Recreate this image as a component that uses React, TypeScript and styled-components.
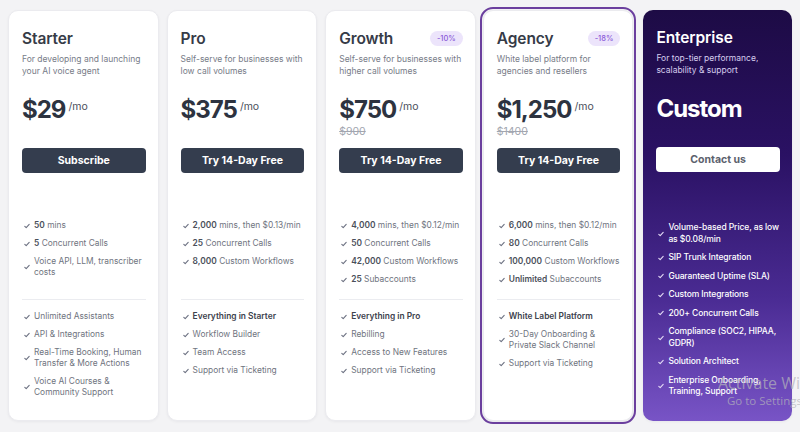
import React from "react";
import styled, { createGlobalStyle, css } from "styled-components";

const GlobalStyle = createGlobalStyle`
  html, body { margin: 0; padding: 0; }
  body {
    background: #f3f3f5;
    font-family: Inter, "Noto Sans", "Liberation Sans", sans-serif;
    -webkit-font-smoothing: antialiased;
  }
  * { box-sizing: border-box; }
`;

type Variant = "default" | "highlight" | "dark";

const Page = styled.div`
  position: relative;
  display: flex;
  gap: 8px;
  height: 432px;
  width: 800px;
  padding: 10px 8px 11px;
  overflow: hidden;
`;

const Card = styled.div<{ $variant: Variant }>`
  flex: 1 1 0;
  min-width: 0;
  display: flex;
  flex-direction: column;
  padding: 17px 12px 12px 13px;
  border-radius: 10px;
  background: #ffffff;
  border: 1px solid #ebebef;
  box-shadow: 0 1px 3px rgba(20, 20, 40, 0.05);
  ${(p) =>
    p.$variant === "highlight" &&
    css`
      outline: 2px solid #6b3f9e;
      outline-offset: 1px;
      margin: 0 0 0 -1px;
    `}
  ${(p) =>
    p.$variant === "dark" &&
    css`
      border: none;
      margin-left: 2px;
      background: linear-gradient(180deg, #1d0b45 0%, #2a1163 35%, #4a2b93 70%, #7854c6 100%);
    `}
`;

const Header = styled.div`
  display: flex;
  align-items: center;
  justify-content: space-between;
  height: 20px;
`;

const Title = styled.h2<{ $dark?: boolean }>`
  margin: 0;
  font-size: 15.5px;
  font-weight: 600;
  letter-spacing: -0.1px;
  color: ${(p) => (p.$dark ? "#ffffff" : "#363b47")};
`;

const Badge = styled.span`
  display: inline-flex;
  align-items: center;
  justify-content: center;
  height: 15px;
  padding: 0 7px;
  border-radius: 8px;
  background: #ece4fb;
  color: #8a5ad8;
  font-size: 7.5px;
  font-weight: 500;
`;

const Desc = styled.p<{ $dark?: boolean }>`
  margin: 5px 0 0;
  font-size: 8.5px;
  line-height: 12px;
  min-height: 24px;
  color: ${(p) => (p.$dark ? "#d6cdee" : "#777c88")};
`;

const PriceRow = styled.div`
  display: flex;
  align-items: flex-start;
  gap: 3px;
  margin-top: 18px;
  height: 30px;
`;

const Amount = styled.span<{ $dark?: boolean }>`
  font-size: 24px;
  line-height: 30px;
  font-weight: 700;
  letter-spacing: -1px;
  color: ${(p) => (p.$dark ? "#ffffff" : "#2d3340")};
`;

const Per = styled.span`
  font-size: 10.5px;
  margin-top: 5px;
  color: #4a4f5b;
`;

const OldPrice = styled.div`
  height: 14px;
  font-size: 10.5px;
  line-height: 14px;
  color: #a2a6b0;
  text-decoration: line-through;
`;

const Cta = styled.button<{ $light?: boolean }>`
  margin-top: 9px;
  height: 25px;
  width: 100%;
  border: none;
  border-radius: 4px;
  font-family: inherit;
  font-size: 10.5px;
  font-weight: 700;
  cursor: pointer;
  background: ${(p) => (p.$light ? "#ffffff" : "#343d4e")};
  color: ${(p) => (p.$light ? "#5b616d" : "#ffffff")};
`;

const List = styled.ul<{ $first?: boolean; $dark?: boolean }>`
  list-style: none;
  margin: ${(p) => (p.$first ? (p.$dark ? "50px 0 0" : "47px 0 0") : "11px 0 0")};
  padding: 0 0 0 2px;
  display: flex;
  flex-direction: column;
  gap: 7px;
  ${(p) => p.$first && !p.$dark && "min-height: 68px;"}
`;

const Item = styled.li<{ $dark?: boolean; $strong?: boolean }>`
  display: flex;
  align-items: center;
  gap: 4px;
  font-size: ${(p) => (p.$dark ? "8.5px" : "8.4px")};
  line-height: ${(p) => (p.$dark ? "11.5px" : "11px")};
  letter-spacing: ${(p) => (p.$dark ? "-0.1px" : "0")};
  font-weight: ${(p) => (p.$dark ? 500 : p.$strong ? 600 : 400)};
  color: ${(p) => (p.$dark ? "#ffffff" : p.$strong ? "#3d424d" : "#6f7480")};
  b {
    font-weight: 600;
    color: #4a4f5a;
  }
`;

const Check = styled.svg<{ $dark?: boolean }>`
  flex: 0 0 auto;
  width: 6px;
  height: 6px;
  color: ${(p) => (p.$dark ? "#e4dcf6" : "#6b7080")};
`;

const Divider = styled.hr`
  margin: 11px 0 0;
  border: none;
  border-top: 1px solid #ebecf0;
`;

const Watermark = styled.div`
  position: absolute;
  left: 718px;
  top: 373px;
  color: rgba(180, 180, 186, 0.72);
  font-family: "Open Sans", "Noto Sans", sans-serif;
  white-space: nowrap;
  pointer-events: none;
`;

const WmBig = styled.div`
  font-size: 16px;
  line-height: 20px;
`;

const WmSmall = styled.div`
  font-size: 11.5px;
  line-height: 16px;
  margin-left: 9px;
`;

type Feature = { bold?: string; text: string; strong?: boolean };

type Plan = {
  name: string;
  desc: string;
  price: string;
  per?: string;
  old?: string;
  badge?: string;
  cta: string;
  variant: Variant;
  list1: Feature[];
  list2?: Feature[];
};

const plans: Plan[] = [
  {
    name: "Starter",
    desc: "For developing and launching your AI voice agent",
    price: "$29",
    per: "/mo",
    cta: "Subscribe",
    variant: "default",
    list1: [
      { bold: "50", text: " mins" },
      { bold: "5", text: " Concurrent Calls" },
      { text: "Voice API, LLM, transcriber costs" },
    ],
    list2: [
      { text: "Unlimited Assistants" },
      { text: "API & Integrations" },
      { text: "Real-Time Booking, Human Transfer & More Actions" },
      { text: "Voice AI Courses & Community Support" },
    ],
  },
  {
    name: "Pro",
    desc: "Self-serve for businesses with low call volumes",
    price: "$375",
    per: "/mo",
    cta: "Try 14-Day Free",
    variant: "default",
    list1: [
      { bold: "2,000", text: " mins, then $0.13/min" },
      { bold: "25", text: " Concurrent Calls" },
      { bold: "8,000", text: " Custom Workflows" },
    ],
    list2: [
      { text: "Everything in Starter", strong: true },
      { text: "Workflow Builder" },
      { text: "Team Access" },
      { text: "Support via Ticketing" },
    ],
  },
  {
    name: "Growth",
    desc: "Self-serve for businesses with higher call volumes",
    price: "$750",
    per: "/mo",
    old: "$900",
    badge: "-10%",
    cta: "Try 14-Day Free",
    variant: "default",
    list1: [
      { bold: "4,000", text: " mins, then $0.12/min" },
      { bold: "50", text: " Concurrent Calls" },
      { bold: "42,000", text: " Custom Workflows" },
      { bold: "25", text: " Subaccounts" },
    ],
    list2: [
      { text: "Everything in Pro", strong: true },
      { text: "Rebilling" },
      { text: "Access to New Features" },
      { text: "Support via Ticketing" },
    ],
  },
  {
    name: "Agency",
    desc: "White label platform for agencies and resellers",
    price: "$1,250",
    per: "/mo",
    old: "$1400",
    badge: "-18%",
    cta: "Try 14-Day Free",
    variant: "highlight",
    list1: [
      { bold: "6,000", text: " mins, then $0.12/min" },
      { bold: "80", text: " Concurrent Calls" },
      { bold: "100,000", text: " Custom Workflows" },
      { bold: "Unlimited", text: " Subaccounts" },
    ],
    list2: [
      { text: "White Label Platform", strong: true },
      { text: "30-Day Onboarding & Private Slack Channel" },
      { text: "Support via Ticketing" },
    ],
  },
  {
    name: "Enterprise",
    desc: "For top-tier performance, scalability & support",
    price: "Custom",
    cta: "Contact us",
    variant: "dark",
    list1: [
      { text: "Volume-based Price, as low as $0.08/min" },
      { text: "SIP Trunk Integration" },
      { text: "Guaranteed Uptime (SLA)" },
      { text: "Custom Integrations" },
      { text: "200+ Concurrent Calls" },
      { text: "Compliance (SOC2, HIPAA, GDPR)" },
      { text: "Solution Architect" },
      { text: "Enterprise Onboarding, Training, Support" },
    ],
  },
];

const CheckIcon = ({ dark }: { dark?: boolean }) => (
  <Check $dark={dark} viewBox="0 0 6 6" fill="none">
    <path d="M0.8 3.4 L2.2 4.7 L5.2 1.4" stroke="currentColor" strokeWidth="1.1" strokeLinecap="round" strokeLinejoin="round" />
  </Check>
);

const FeatureList = ({ items, first, dark }: { items: Feature[]; first?: boolean; dark?: boolean }) => (
  <List $first={first} $dark={dark}>
    {items.map((f, i) => (
      <Item key={i} $dark={dark} $strong={f.strong}>
        <CheckIcon dark={dark} />
        <span>
          {f.bold && <b>{f.bold}</b>}
          {f.text}
        </span>
      </Item>
    ))}
  </List>
);

export default function App() {
  return (
    <>
      <GlobalStyle />
      <Page>
        {plans.map((p) => {
          const dark = p.variant === "dark";
          return (
            <Card key={p.name} $variant={p.variant}>
              <Header>
                <Title $dark={dark}>{p.name}</Title>
                {p.badge && <Badge>{p.badge}</Badge>}
              </Header>
              <Desc $dark={dark}>{p.desc}</Desc>
              <PriceRow>
                <Amount $dark={dark}>{p.price}</Amount>
                {p.per && <Per>{p.per}</Per>}
              </PriceRow>
              <OldPrice>{p.old}</OldPrice>
              <Cta $light={dark}>{p.cta}</Cta>
              <FeatureList items={p.list1} first dark={dark} />
              {p.list2 && (
                <>
                  <Divider />
                  <FeatureList items={p.list2} />
                </>
              )}
            </Card>
          );
        })}
        <Watermark>
          <WmBig>Activate Windows</WmBig>
          <WmSmall>Go to Settings to activate Windows.</WmSmall>
        </Watermark>
      </Page>
    </>
  );
}
